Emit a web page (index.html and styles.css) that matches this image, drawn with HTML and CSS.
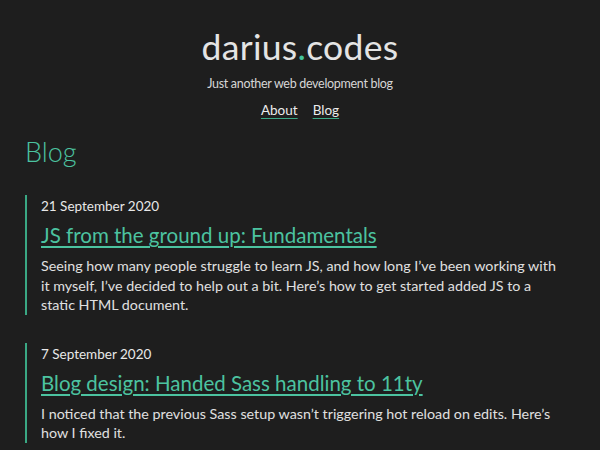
FILE: index.html
```html
<!DOCTYPE html>
<html lang="en">
<head>
<meta charset="utf-8">
<title>darius.codes</title>
<link rel="stylesheet" href="styles.css">
</head>
<body>
<header class="site-header">
  <div class="site-title">darius<span class="dot">.</span>codes</div>
  <p class="tagline">Just another web development blog</p>
  <nav class="nav">
    <a href="#">About</a>
    <a href="#">Blog</a>
  </nav>
</header>
<main class="content">
  <h1 class="page-title">Blog</h1>
  <article class="post">
    <div class="post-date">21 September 2020</div>
    <h2 class="post-title"><a href="#">JS from the ground up: Fundamentals</a></h2>
    <p class="post-summary">Seeing how many people struggle to learn JS, and how long I’ve been working with it myself, I’ve decided to help out a bit. Here’s how to get started added JS to a static HTML document.</p>
  </article>
  <article class="post">
    <div class="post-date">7 September 2020</div>
    <h2 class="post-title"><a href="#">Blog design: Handed Sass handling to 11ty</a></h2>
    <p class="post-summary">I noticed that the previous Sass setup wasn’t triggering hot reload on edits. Here’s how I fixed it.</p>
  </article>
</main>
</body>
</html>
```
FILE: styles.css
```css
* { box-sizing: border-box; }
html, body {
  margin: 0;
  padding: 0;
  background: #1e1e1e;
  color: #e6e6e6;
  font-family: "Lato", "Open Sans", sans-serif;
}
.site-header {
  text-align: center;
  padding-top: 24px;
}
.site-title {
  font-size: 35.5px;
  line-height: 46px;
  font-weight: 400;
  color: #e4e4e4;
  letter-spacing: 0.3px;
}
.dot { color: #43c39c; }
.tagline {
  margin: 4px 0 0;
  font-size: 12.5px;
  line-height: 20px;
  font-weight: 400;
  letter-spacing: -0.3px;
  color: #d6d6d6;
}
.nav {
  display: flex;
  justify-content: center;
  gap: 15px;
  margin-top: 5px;
}
.nav a {
  color: #ececec;
  font-size: 13.5px;
  line-height: 22px;
  text-decoration: underline;
  text-decoration-color: #3aa884;
  text-underline-offset: 3px;
}
.content {
  padding: 0 40px 0 25px;
}
.page-title {
  margin: 11px 0 0;
  font-size: 27px;
  line-height: 40px;
  font-weight: 300;
  color: #4cc3a0;
}
.post {
  border-left: 2px solid #3aa884;
  padding-left: 14px;
  margin-top: 23px;
  margin-bottom: 28px;
}
.post-date {
  font-size: 13.5px;
  line-height: 22px;
  color: #e8e8e8;
}
.post-title {
  margin: 4px 0 0;
  font-size: 20.5px;
  line-height: 28px;
  font-weight: 400;
}
.post-title a {
  color: #4cc3a0;
  text-decoration: underline;
  text-decoration-thickness: 1.5px;
  text-underline-offset: 3px;
}
.post-summary {
  margin: 7px 0 0;
  font-size: 14.3px;
  line-height: 19.5px;
  color: #e0e0e0;
}
```
